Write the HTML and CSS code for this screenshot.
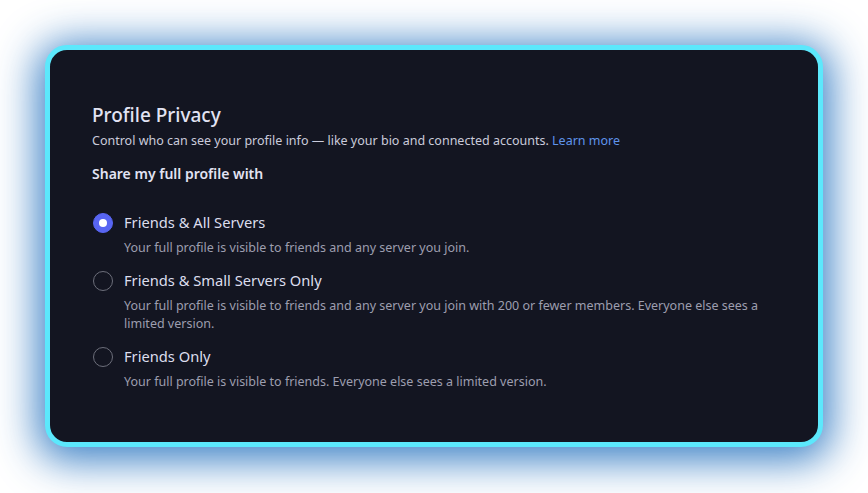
FILE: index.html
```html
<!DOCTYPE html>
<html lang="en">

<head>
  <meta charset="UTF-8">
  <meta name="viewport" content="width=device-width, initial-scale=1.0">
  <title>Profile Privacy</title>
  <link rel="stylesheet" href="styles.css">
</head>

<body>

  <div class="card">
    <h1 class="title">Profile Privacy</h1>
    <p class="intro">Control who can see your profile info — like your bio and connected accounts. <a href="#">Learn more</a></p>

    <h2 class="share-label">Share my full profile with</h2>

    <div class="options">
      <label class="option">
        <input type="radio" name="share" checked>
        <span class="radio"></span>
        <span class="option-text">
          <span class="option-name">Friends &amp; All Servers</span>
          <span class="option-desc">Your full profile is visible to friends and any server you join.</span>
        </span>
      </label>

      <label class="option">
        <input type="radio" name="share">
        <span class="radio"></span>
        <span class="option-text">
          <span class="option-name">Friends &amp; Small Servers Only</span>
          <span class="option-desc">Your full profile is visible to friends and any server you join with 200 or fewer members. Everyone else sees a limited version.</span>
        </span>
      </label>

      <label class="option">
        <input type="radio" name="share">
        <span class="radio"></span>
        <span class="option-text">
          <span class="option-name">Friends Only</span>
          <span class="option-desc">Your full profile is visible to friends. Everyone else sees a limited version.</span>
        </span>
      </label>
    </div>
  </div>

</body>

</html>
```

FILE: styles.css
```css
body {
  font-family: "Noto Sans", Arial, sans-serif;
  background-color: #ffffff;
  margin: 0;
  padding: 45px;
  height: 100vh;
  box-sizing: border-box;
}

.card {
  height: 402px;
  box-sizing: border-box;
  background-color: #131521;
  border: 5px solid #5ce8fc;
  border-radius: 22px;
  box-shadow: 0 6px 40px 8px rgba(28, 108, 188, 0.85);
  padding: 53px 42px 0 42px;
  color: #dfe0f0;
}

.title {
  margin: 0;
  font-size: 19px;
  line-height: 24px;
  font-weight: 500;
  color: #e2e3f3;
}

.intro {
  margin: 5px 0 0;
  font-size: 12.5px;
  line-height: 18px;
  color: #cacbdb;
}

.intro a {
  color: #5f94ec;
  text-decoration: none;
}

.share-label {
  margin: 14px 0 0;
  font-size: 14px;
  line-height: 20px;
  font-weight: 600;
  color: #e2e3f3;
}

.options {
  margin-top: 28px;
  display: flex;
  flex-direction: column;
  gap: 13px;
}

.option {
  display: flex;
  align-items: flex-start;
  gap: 11px;
  cursor: pointer;
}

.option input {
  display: none;
}

.radio {
  flex: none;
  width: 20px;
  height: 20px;
  margin-top: 1px;
  margin-left: 1px;
  box-sizing: border-box;
  border: 1.5px solid #6c6e7a;
  border-radius: 50%;
  display: flex;
  align-items: center;
  justify-content: center;
}

.option input:checked + .radio {
  background-color: #5865f2;
  border-color: #5865f2;
}

.option input:checked + .radio::after {
  content: "";
  width: 8px;
  height: 8px;
  border-radius: 50%;
  background-color: #ffffff;
}

.option-text {
  display: flex;
  flex-direction: column;
  gap: 7px;
}

.option-name {
  font-size: 14.7px;
  line-height: 20px;
  color: #dcdded;
}

.option-desc {
  font-size: 12.5px;
  line-height: 18px;
  color: #9d9eaf;
}
```
